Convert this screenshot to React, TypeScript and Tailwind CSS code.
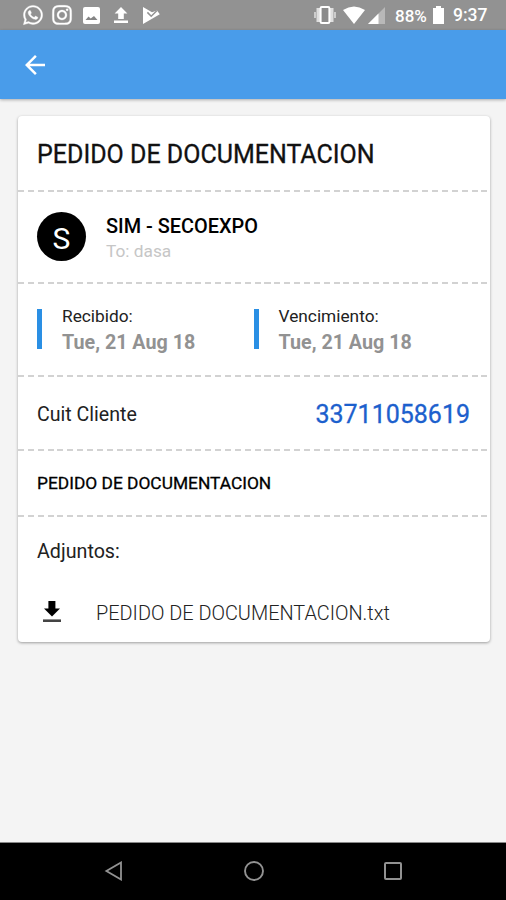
import type { ReactNode } from "react";
import { FaInstagram, FaWhatsapp } from "react-icons/fa";
import { MdArrowBack } from "react-icons/md";

function StatusBar() {
  return (
    <div className="flex h-[30px] shrink-0 items-center bg-[#929292] text-white">
      <div className="flex w-[170px] items-center pl-[22px]">
        <FaWhatsapp className="size-[22px]" stroke="currentColor" strokeWidth="8" />
        <FaInstagram className="ml-[7px] size-[22px]" stroke="currentColor" strokeWidth="8" />
        <svg className="ml-[10px] size-[17px]" viewBox="0 0 17 17">
          <rect width="17" height="17" rx="2" fill="currentColor" />
          <path d="m2.5 13 3-3.6 2.2 2.2L11 9l3.5 4z" fill="#858585" />
        </svg>
        <svg className="ml-[14px] h-[16px] w-[14px]" viewBox="0 0 14 16" fill="currentColor">
          <path d="M7 0 13.4 6.6H9.8V12H4.2V6.6H.6zM0 13.6H14V16H0z" />
        </svg>
        <svg className="ml-[15px] h-[17px] w-[17px]" viewBox="0 0 17 17" fill="currentColor">
          <path d="M0 0 9 5.2 14 3.6 16.8 7.2 0 17z" />
          <path d="m4.4 5.4 3.8 3.8 5.6-5.4" fill="none" stroke="#929292" strokeWidth="1.5" />
        </svg>
      </div>
      <div className="ml-auto flex items-center pr-[19px] font-medium">
        <svg className="h-[18px] w-[22px]" viewBox="0 0 22 18">
          <path d="M4.5 2v14M17.5 2v14" stroke="white" strokeWidth="4" opacity=".7" />
          <path d="M1 6v6M21 6v6" stroke="white" strokeWidth="1.8" opacity=".6" />
          <rect x="6.6" y="1" width="8.8" height="16" rx="1.2" fill="#8c8c8c" stroke="white" strokeWidth="2" />
        </svg>
        <svg className="ml-[7px] h-[18px] w-[22px]" viewBox="0 0 22 18" fill="currentColor">
          <path d="M0 4Q11-3 22 4L11 18z" />
        </svg>
        <svg className="ml-[3px] h-[17px] w-[17px]" viewBox="0 0 17 17" fill="currentColor">
          <path d="M17 0V17H0z" opacity=".35" />
          <path d="M10.5 6.5V17H0z" />
        </svg>
        <span className="relative top-px ml-[10px] w-[33px] text-[17px] leading-none whitespace-nowrap">88%</span>
        <svg className="ml-[5px] h-[18px] w-[11px]" viewBox="0 0 11 18" fill="currentColor">
          <path d="M3 0h5v2h3v16H0V2h3z" />
        </svg>
        <span className="relative top-px ml-[9px] w-[34px] text-[17.5px] leading-none whitespace-nowrap">9:37</span>
      </div>
    </div>
  );
}

function Divider() {
  return (
    <div className="h-[2px] shrink-0 bg-[repeating-linear-gradient(90deg,#d2d2d2_0,#d2d2d2_6px,#fff_6px,#fff_9.86px)]" />
  );
}

function DateField({ label, value }: { label: string; value: string }) {
  return (
    <div className="flex w-[216.5px] gap-5">
      <div className="h-10 w-[5px] bg-[#2a8fe4]" />
      <div className="whitespace-nowrap">
        <div className="text-[17.3px] leading-[15px] text-[#222]">{label}</div>
        <div className="mt-[7px] text-[19.7px] leading-[23px] font-bold text-[#929292]">{value}</div>
      </div>
    </div>
  );
}

function Section({ className, children }: { className: string; children: ReactNode }) {
  return <section className={`flex shrink-0 items-center px-[19px] whitespace-nowrap ${className}`}>{children}</section>;
}

export default function App() {
  return (
    <div className="flex h-[900px] w-[506px] flex-col overflow-hidden bg-[#f4f4f4] font-['Roboto',sans-serif] text-black">
      <StatusBar />
      <header className="flex h-[69px] shrink-0 items-center bg-[#499cea] pl-5 shadow-[0_1px_3px_rgba(0,0,0,.3)]">
        <MdArrowBack className="size-[30px] text-white" />
      </header>

      <main className="flex-1 pt-[17px] pr-4 pl-[18px]">
        <article className="flex h-[526px] flex-col rounded-[4px] bg-white shadow-[0_1px_3px_rgba(0,0,0,.36)]">
          <Section className="h-[74px] pt-[3px]">
            <h1 className="text-[25px] text-[#111] [-webkit-text-stroke:0.3px_#111]">PEDIDO DE DOCUMENTACION</h1>
          </Section>
          <Divider />
          <Section className="h-[90px] gap-5 pb-px">
            <div className="flex size-[49px] items-center justify-center rounded-full bg-black pt-[3px] text-[30px] text-white">
              S
            </div>
            <div className="pt-[3px]">
              <div className="text-[19.9px] leading-[22px] font-medium">SIM - SECOEXPO</div>
              <div className="mt-[3px] text-[17.3px] leading-[20px] text-[#c6c6c6]">To: dasa</div>
            </div>
          </Section>
          <Divider />
          <Section className="h-[91px] pt-[3px]">
            <DateField label="Recibido:" value="Tue, 21 Aug 18" />
            <DateField label="Vencimiento:" value="Tue, 21 Aug 18" />
          </Section>
          <Divider />
          <Section className="h-[72px] justify-between pt-[3px]">
            <span className="text-[19.6px] text-[#222]">Cuit Cliente</span>
            <span className="mr-px text-[25px] text-[#1c60cd] [-webkit-text-stroke:0.3px_#1c60cd]">33711058619</span>
          </Section>
          <Divider />
          <Section className="h-[64px] pt-px">
            <span className="text-[17.35px] [-webkit-text-stroke:0.3px_black]">PEDIDO DE DOCUMENTACION</span>
          </Section>
          <Divider />
          <Section className="h-[66px] pt-[4px]">
            <span className="text-[19.7px] text-[#222]">Adjuntos:</span>
          </Section>
          <Section className="h-[58px]">
            <svg className="ml-[6px] h-[22px] w-[18px]" viewBox="0 0 18 22">
              <path d="M5.4 0h7v7.6H17L9 15.5 1 7.6h4.4z" />
              <path d="M0 18.4h18V21H0z" fill="#444" />
            </svg>
            <span className="ml-[35px] pt-[3px] text-[19.9px] font-light text-[#222]">PEDIDO DE DOCUMENTACION.txt</span>
          </Section>
        </article>
      </main>

      <nav className="flex h-[58px] shrink-0 items-center border-t border-[#888] bg-black pb-px pl-[104px]">
        <svg className="h-5 w-[18px]" viewBox="0 0 18 20" fill="none" stroke="#929292" strokeWidth="1.8">
          <path d="M17 1.5v17L2.4 10z" />
        </svg>
        <svg className="ml-[121px] size-[22px]" viewBox="0 0 22 22" fill="none" stroke="#929292" strokeWidth="1.9">
          <circle cx="11" cy="11" r="9" />
        </svg>
        <svg className="ml-[118px] size-5" viewBox="0 0 20 20" fill="none" stroke="#929292" strokeWidth="2">
          <rect x="2" y="2" width="16" height="16" rx="1" />
        </svg>
      </nav>
    </div>
  );
}
